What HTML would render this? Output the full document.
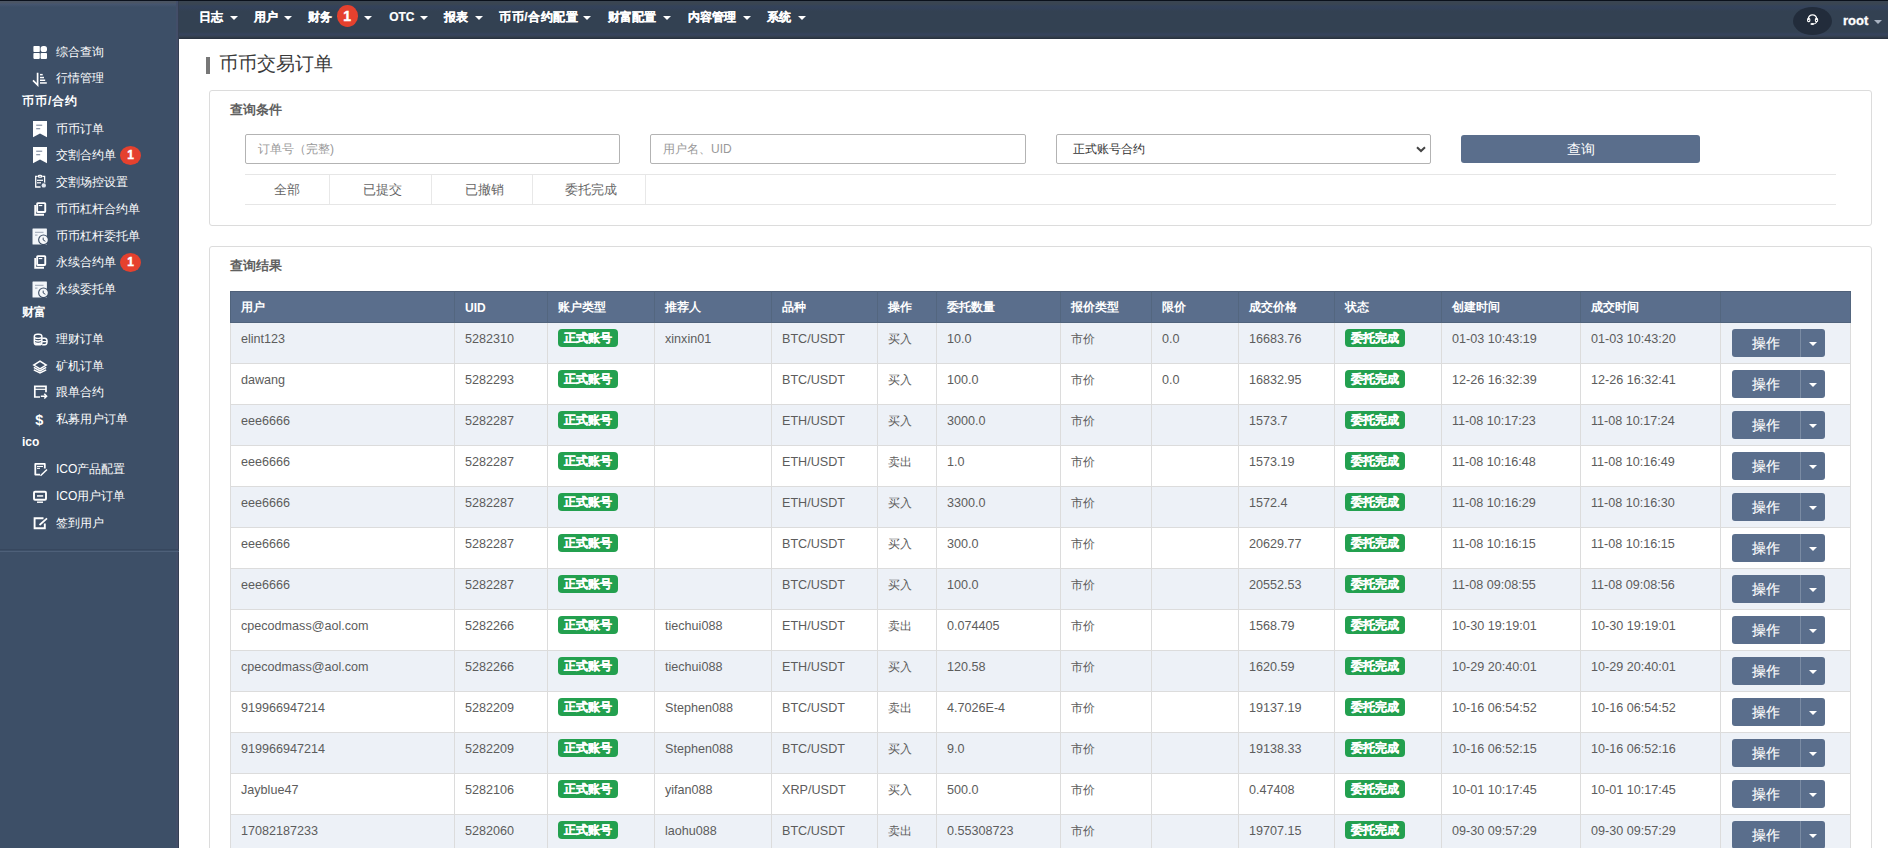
<!DOCTYPE html><html><head><meta charset="utf-8"><style>
*{box-sizing:border-box;margin:0;padding:0}
html,body{width:1888px;height:848px;overflow:hidden;background:#fff;font-family:"Liberation Sans",sans-serif;}
.a{position:absolute;white-space:nowrap}
#sb{position:absolute;left:0;top:0;width:179px;height:848px;background:#3d4f67}
#nav{position:absolute;left:179px;top:0;width:1709px;height:39px;background:linear-gradient(#3a4552 0px,#3a4552 4px,#34435a 6px,#34425a 8px,#334152 11px,#334152 32px,#36435c 34px,#36435c 35px,#343f4d 37px,#2a3341 38px,#2a3341 39px)}
#topline{position:absolute;left:0;top:0;width:1888px;height:1px;background:#0b111c}
.ni{position:absolute;top:10px;height:14px;line-height:14px;font-size:12px;font-weight:bold;-webkit-text-stroke:0.2px #fff;color:#fff}
.caret{position:absolute;width:0;height:0;border-left:4px solid transparent;border-right:4px solid transparent;border-top:4px solid #fff}
.nbadge{position:absolute;background:#e5412e;color:#fff;font-weight:bold;-webkit-text-stroke:0.4px #fff;border-radius:50%;text-align:center}
.si{position:absolute;left:56px;height:16px;line-height:16px;font-size:12px;color:#fff}
.sh{position:absolute;left:22px;height:16px;line-height:16px;font-size:12px;font-weight:bold;color:#fff}
.ic{position:absolute;left:32px}
.panel{position:absolute;left:209px;width:1663px;border:1px solid #dcdcdc;border-radius:3px;background:#fff}
.ph{position:absolute;left:230px;font-size:13px;font-weight:bold;color:#606060;line-height:14px}
.inp{position:absolute;top:134px;height:30px;border:1px solid #b3b3b3;border-radius:2px;background:#fff;font-size:12px;color:#999;line-height:28px;padding-left:12px}
.tab{position:absolute;top:175px;height:29px;line-height:29px;font-size:13px;color:#666;text-align:center}
.vl{position:absolute;width:1px;background:#e8e8e8}
.hl{position:absolute;height:1px;background:#e6e6e6}
table{position:absolute;left:230px;top:291px;border-collapse:separate;border-spacing:0;table-layout:fixed;font-size:12.6px;color:#5c5c5c}
th{background:#5a6e8c;color:#fff;font-weight:bold;text-align:left;height:32px;padding:1px 0 0 10px;border-right:1px solid #53667f;border-top:1px solid #4f6079;border-bottom:1px solid #50637c;font-size:12px;vertical-align:middle}
th:first-child{border-left:1px solid #50637c}
td{height:41px;border-right:1px solid #dcdcdc;border-bottom:1px solid #dcdcdc;padding:0 0 0 10px;vertical-align:top;padding-top:9px;line-height:15px}
td:first-child{border-left:1px solid #dcdcdc}
tr.s td{background:#edf1f7}
.cj{font-size:12px}
.bd{display:inline-block;background:#23a04f;color:#fff;font-weight:bold;-webkit-text-stroke:0.25px #fff;font-size:12px;height:18px;line-height:18px;border-radius:4px;padding:0 6px;margin-top:-3px;vertical-align:top}
.op{position:relative;display:inline-block;width:93px;height:28px;background:#5a6e8c;border-radius:3px;margin-left:1px;margin-top:-3px;vertical-align:top}
.op span{position:absolute;left:0;top:0;width:68px;height:28px;line-height:28px;text-align:center;color:#fff;font-size:14px;-webkit-text-stroke:0.15px #fff}
.op i{position:absolute;left:68px;top:0;width:1px;height:28px;background:#7a8ba3}
.op b{position:absolute;left:77px;top:13px;width:0;height:0;border-left:4px solid transparent;border-right:4px solid transparent;border-top:4px solid #fff}
</style></head><body>
<div id="sb"></div>
<div class="a" style="left:0;top:0;width:179px;height:7px;background:linear-gradient(#4b5564 1px,#4b5564 3px,#465670 4px,#3d4f67 7px)"></div>
<div class="a" style="left:176px;top:0;width:2px;height:848px;background:#434e69"></div>
<div class="a" style="left:178px;top:0;width:1px;height:848px;background:#353f52"></div>
<div class="a" style="left:0;top:549px;width:179px;height:1px;background:#37475e"></div>
<div class="a" style="left:0;top:551px;width:179px;height:1px;background:#4e6079"></div>
<div class="si" style="top:43.5px">综合查询</div>
<div class="ic" style="top:43.5px"><svg width="18" height="18" viewBox="0 0 18 18"><rect x="1.4" y="1.9" width="6.4" height="6.2" rx="0.8" fill="#fff"/><rect x="8.6" y="1.9" width="6.4" height="6.2" rx="2.6" fill="#fff"/><rect x="1.4" y="8.9" width="6.4" height="6" rx="0.8" fill="#fff"/><rect x="8.6" y="8.9" width="6.4" height="6" rx="0.8" fill="#fff"/></svg></div>
<div class="si" style="top:70.3px">行情管理</div>
<div class="ic" style="top:70.3px"><svg width="18" height="18" viewBox="0 0 18 18"><path d="M1 10.3L5.6 15V2.7" stroke="#fff" stroke-width="1.7" fill="none"/><rect x="8" y="3.9" width="2.7" height="1.5" fill="#fff"/><rect x="8" y="6.8" width="4" height="1.5" fill="#fff"/><rect x="8" y="9.5" width="5.2" height="1.5" fill="#fff"/><rect x="8" y="12.2" width="6.8" height="1.5" fill="#fff"/></svg></div>
<div class="sh" style="top:92.8px;letter-spacing:1px">币币/合约</div>
<div class="si" style="top:120.5px">币币订单</div>
<div class="ic" style="top:120.5px"><svg width="18" height="18" viewBox="0 0 18 18"><path d="M1 0h14v16.2l-7-3.6-7 3.6z" fill="#fff"/><rect x="4.2" y="3.6" width="6" height="1.3" fill="#8f9aab"/><rect x="4.2" y="7" width="4" height="1.3" fill="#8f9aab"/></svg></div>
<div class="si" style="top:147.3px">交割合约单</div>
<div class="ic" style="top:147.3px"><svg width="18" height="18" viewBox="0 0 18 18"><path d="M1 0h14v16.2l-7-3.6-7 3.6z" fill="#fff"/><rect x="4.2" y="3.6" width="6" height="1.3" fill="#8f9aab"/><rect x="4.2" y="7" width="4" height="1.3" fill="#8f9aab"/></svg></div>
<div class="nbadge" style="left:120px;top:145.8px;width:21px;height:19px;line-height:19px;font-size:12px">1</div>
<div class="si" style="top:174.3px">交割场控设置</div>
<div class="ic" style="top:174.3px"><svg width="18" height="18" viewBox="0 0 18 18"><path d="M5.6 2.3H3.7V13H8.6" stroke="#fff" stroke-width="1.3" fill="none"/><path d="M10.4 2.3h2.2v7" stroke="#fff" stroke-width="1.3" fill="none"/><rect x="6.4" y="1.3" width="3.4" height="1.8" rx="0.9" stroke="#fff" stroke-width="1.3" fill="none"/><rect x="5" y="5.7" width="6" height="1.2" fill="#fff"/><rect x="5" y="8.2" width="4" height="1.2" fill="#fff"/><circle cx="11.8" cy="11.4" r="3" fill="#3d4f67"/><circle cx="11.8" cy="11.4" r="2.2" fill="#dfe5ee"/></svg></div>
<div class="si" style="top:201px">币币杠杆合约单</div>
<div class="ic" style="top:201px"><svg width="18" height="18" viewBox="0 0 18 18"><rect x="5.15" y="2.15" width="8.1" height="8.8" rx="0.6" stroke="#fff" stroke-width="1.9" fill="none"/><path d="M3.2 4v9.75H12" stroke="#fff" stroke-width="1.8" fill="none"/><rect x="6.8" y="4" width="3.5" height="1.1" fill="#fff"/></svg></div>
<div class="si" style="top:227.5px">币币杠杆委托单</div>
<div class="ic" style="top:227.5px"><svg width="18" height="18" viewBox="0 0 18 18"><rect x="0.5" y="0.4" width="14.4" height="16.1" rx="0.5" fill="#f2f6fa"/><rect x="3" y="3.8" width="8.5" height="1" fill="#9aa4b4"/><rect x="3" y="6.6" width="2.5" height="1" fill="#9aa4b4"/><circle cx="11.5" cy="11.8" r="5.4" fill="#3d4f67"/><circle cx="11.5" cy="11.8" r="4.3" fill="#f4f6f9"/><path d="M11.2 9.6V12l2.2 1.3" stroke="#3d4f67" stroke-width="1" fill="none"/></svg></div>
<div class="si" style="top:254.3px">永续合约单</div>
<div class="ic" style="top:254.3px"><svg width="18" height="18" viewBox="0 0 18 18"><rect x="5.15" y="2.15" width="8.1" height="8.8" rx="0.6" stroke="#fff" stroke-width="1.9" fill="none"/><path d="M3.2 4v9.75H12" stroke="#fff" stroke-width="1.8" fill="none"/><rect x="6.8" y="4" width="3.5" height="1.1" fill="#fff"/></svg></div>
<div class="nbadge" style="left:120px;top:252.8px;width:21px;height:19px;line-height:19px;font-size:12px">1</div>
<div class="si" style="top:280.7px">永续委托单</div>
<div class="ic" style="top:280.7px"><svg width="18" height="18" viewBox="0 0 18 18"><rect x="0.5" y="0.4" width="14.4" height="16.1" rx="0.5" fill="#f2f6fa"/><rect x="3" y="3.8" width="8.5" height="1" fill="#9aa4b4"/><rect x="3" y="6.6" width="2.5" height="1" fill="#9aa4b4"/><circle cx="11.5" cy="11.8" r="5.4" fill="#3d4f67"/><circle cx="11.5" cy="11.8" r="4.3" fill="#f4f6f9"/><path d="M11.2 9.6V12l2.2 1.3" stroke="#3d4f67" stroke-width="1" fill="none"/></svg></div>
<div class="sh" style="top:303.5px">财富</div>
<div class="si" style="top:331.3px">理财订单</div>
<div class="ic" style="top:331.3px"><svg width="18" height="18" viewBox="0 0 18 18"><rect x="2.35" y="3.15" width="7.5" height="10.7" rx="3" ry="2.2" stroke="#fff" stroke-width="1.5" fill="none"/><path d="M2.6 6.6q3.5 1.6 7 0M2.6 9.2q3.5 1.6 7 0M2.6 11.6q3.5 1.6 7 0" stroke="#fff" stroke-width="1.3" fill="none"/><path d="M10.2 7.3h2.5c1.5 0 2.4 1.2 2.4 3.2s-.9 3.3-2.4 3.3h-2.5M10.2 10.6h4.5" stroke="#fff" stroke-width="1.4" fill="none"/></svg></div>
<div class="si" style="top:357.5px">矿机订单</div>
<div class="ic" style="top:357.5px"><svg width="18" height="18" viewBox="0 0 18 18"><path d="M8 3.1l6.2 4-6.2 3.8-6.2-3.8z" stroke="#fff" stroke-width="1.5" fill="none"/><path d="M1.8 9.4l6.2 3.6 6.2-3.6M1.8 11.8l6.2 3.2 6.2-3.2" stroke="#fff" stroke-width="1.5" fill="none"/></svg></div>
<div class="si" style="top:384.3px">跟单合约</div>
<div class="ic" style="top:384.3px"><svg width="18" height="18" viewBox="0 0 18 18"><path d="M8 13H2.8V2.3h11.2v6" stroke="#fff" stroke-width="1.7" fill="none"/><rect x="2.5" y="4.7" width="11.5" height="1.2" fill="#fff"/><path d="M8.8 12.2h5.5M12.3 9.8l2.3 2.4-2.3 2.4" stroke="#fff" stroke-width="1.5" fill="none"/></svg></div>
<div class="si" style="top:411px">私募用户订单</div>
<div class="ic" style="top:411px"><svg width="18" height="18" viewBox="0 0 18 18"><text x="3.3" y="14" font-family="Liberation Sans" font-weight="bold" font-size="14.5" fill="#fff">$</text></svg></div>
<div class="sh" style="top:433.5px">ico</div>
<div class="si" style="top:461.3px">ICO产品配置</div>
<div class="ic" style="top:461.3px"><svg width="18" height="18" viewBox="0 0 18 18"><path d="M8 13.6H3.3V2.9h9.5v4.6" stroke="#fff" stroke-width="1.8" fill="none" stroke-linejoin="round"/><rect x="5" y="4.9" width="6" height="1.1" fill="#fff"/><rect x="5" y="6.8" width="3" height="1.1" fill="#fff"/><path d="M8.5 14.8L15 8.5" stroke="#fff" stroke-width="1.5" fill="none"/></svg></div>
<div class="si" style="top:488px">ICO用户订单</div>
<div class="ic" style="top:488px"><svg width="18" height="18" viewBox="0 0 18 18"><rect x="2" y="3.7" width="12" height="8.1" rx="1" stroke="#fff" stroke-width="1.9" fill="none"/><rect x="5" y="7.2" width="6.2" height="1.5" fill="#fff"/><rect x="5" y="13.5" width="6" height="1.4" fill="#fff"/></svg></div>
<div class="si" style="top:514.5px">签到用户</div>
<div class="ic" style="top:514.5px"><svg width="18" height="18" viewBox="0 0 18 18"><path d="M11.5 3.3H2.6v9.9h10.2V8.5" stroke="#fff" stroke-width="1.9" fill="none"/><path d="M7.5 10L15 3.3" stroke="#fff" stroke-width="1.7" fill="none"/></svg></div>
<div id="nav"></div>
<div id="topline"></div>
<div class="ni" style="left:198.5px">日志</div>
<div class="caret" style="left:229.7px;top:16px"></div>
<div class="ni" style="left:253.5px">用户</div>
<div class="caret" style="left:284px;top:16px"></div>
<div class="ni" style="left:308.2px">财务</div>
<div class="caret" style="left:364px;top:16px"></div>
<div class="ni" style="left:389.2px">OTC</div>
<div class="caret" style="left:419.7px;top:16px"></div>
<div class="ni" style="left:444px">报表</div>
<div class="caret" style="left:475px;top:16px"></div>
<div class="ni" style="left:499.3px;letter-spacing:.5px">币币/合约配置</div>
<div class="caret" style="left:583px;top:16px"></div>
<div class="ni" style="left:607.8px">财富配置</div>
<div class="caret" style="left:663px;top:16px"></div>
<div class="ni" style="left:687.5px">内容管理</div>
<div class="caret" style="left:743px;top:16px"></div>
<div class="ni" style="left:767px">系统</div>
<div class="caret" style="left:798px;top:16px"></div>
<div class="nbadge" style="left:336.5px;top:5px;width:21.5px;height:22px;line-height:22px;font-size:14px">1</div>
<div class="a" style="left:1793px;top:7px;width:39px;height:28px;border-radius:50%;background:#222c3b"></div>
<svg class="a" style="left:1806px;top:13px" width="13" height="13" viewBox="0 0 13 13"><path d="M2.3 7V6a4.2 4.2 0 0 1 8.4 0V7" stroke="#fff" stroke-width="1.2" fill="none"/><rect x="1.6" y="5.6" width="2.2" height="3" rx="0.8" stroke="#fff" stroke-width="1.1" fill="none"/><rect x="9.4" y="5.6" width="2.2" height="3" rx="0.8" stroke="#fff" stroke-width="1.1" fill="none"/><path d="M10.5 9c-.3 1.3-1.8 2-3.8 2" stroke="#fff" stroke-width="1.1" fill="none"/><ellipse cx="6.2" cy="11" rx="1.8" ry="1" fill="#fff"/></svg>
<div class="a" style="left:1843px;top:13.5px;font-size:13px;font-weight:bold;-webkit-text-stroke:0.3px #fff;color:#fff;line-height:14px">root</div>
<div class="caret" style="left:1874px;top:20px;border-top-color:#a9b3c2"></div>
<div class="a" style="left:206px;top:57px;width:4px;height:17px;background:#777"></div>
<div class="a" style="left:219px;top:52px;font-size:19px;color:#3a3a3a;line-height:24px">币币交易订单</div>
<div class="panel" style="top:90px;height:136px"></div>
<div class="ph" style="top:103px">查询条件</div>
<div class="inp" style="left:245px;width:375px">订单号（完整)</div>
<div class="inp" style="left:650px;width:376px">用户名、UID</div>
<div class="inp" style="left:1056px;width:375px;color:#333;padding-left:16px">正式账号合约</div>
<svg class="a" style="left:1416px;top:145px" width="10" height="8" viewBox="0 0 10 8"><path d="M1 2.2l4 3.8 4-3.8" stroke="#444" stroke-width="2" fill="none"/></svg>
<div class="a" style="left:1461px;top:135px;width:239px;height:28px;background:#5a6e8c;border-radius:3px;color:#fff;font-size:14px;text-align:center;line-height:28px">查询</div>
<div class="hl" style="left:245px;top:174px;width:1591px"></div>
<div class="hl" style="left:245px;top:204px;width:1591px"></div>
<div class="vl" style="left:329px;top:175px;height:29px"></div>
<div class="vl" style="left:431px;top:175px;height:29px"></div>
<div class="vl" style="left:532px;top:175px;height:29px"></div>
<div class="vl" style="left:645px;top:175px;height:29px"></div>
<div class="tab" style="left:274px">全部</div>
<div class="tab" style="left:363px">已提交</div>
<div class="tab" style="left:465px">已撤销</div>
<div class="tab" style="left:565px">委托完成</div>
<div class="panel" style="top:246px;height:700px"></div>
<div class="ph" style="top:259px">查询结果</div>
<table style="width:1621px"><colgroup><col style="width:225px"><col style="width:93px"><col style="width:107px"><col style="width:117px"><col style="width:106px"><col style="width:59px"><col style="width:124px"><col style="width:91px"><col style="width:87px"><col style="width:96px"><col style="width:107px"><col style="width:139px"><col style="width:140px"><col style="width:130px"></colgroup><tr><th>用户</th><th>UID</th><th>账户类型</th><th>推荐人</th><th>品种</th><th>操作</th><th>委托数量</th><th>报价类型</th><th>限价</th><th>成交价格</th><th>状态</th><th>创建时间</th><th>成交时间</th><th></th></tr><tr class="s"><td>elint123</td><td>5282310</td><td><span class="bd">正式账号</span></td><td>xinxin01</td><td>BTC/USDT</td><td><span class="cj">买入</span></td><td>10.0</td><td><span class="cj">市价</span></td><td>0.0</td><td>16683.76</td><td><span class="bd">委托完成</span></td><td>01-03 10:43:19</td><td>01-03 10:43:20</td><td><span class="op"><span>操作</span><i></i><b></b></span></td></tr><tr><td>dawang</td><td>5282293</td><td><span class="bd">正式账号</span></td><td></td><td>BTC/USDT</td><td><span class="cj">买入</span></td><td>100.0</td><td><span class="cj">市价</span></td><td>0.0</td><td>16832.95</td><td><span class="bd">委托完成</span></td><td>12-26 16:32:39</td><td>12-26 16:32:41</td><td><span class="op"><span>操作</span><i></i><b></b></span></td></tr><tr class="s"><td>eee6666</td><td>5282287</td><td><span class="bd">正式账号</span></td><td></td><td>ETH/USDT</td><td><span class="cj">买入</span></td><td>3000.0</td><td><span class="cj">市价</span></td><td></td><td>1573.7</td><td><span class="bd">委托完成</span></td><td>11-08 10:17:23</td><td>11-08 10:17:24</td><td><span class="op"><span>操作</span><i></i><b></b></span></td></tr><tr><td>eee6666</td><td>5282287</td><td><span class="bd">正式账号</span></td><td></td><td>ETH/USDT</td><td><span class="cj">卖出</span></td><td>1.0</td><td><span class="cj">市价</span></td><td></td><td>1573.19</td><td><span class="bd">委托完成</span></td><td>11-08 10:16:48</td><td>11-08 10:16:49</td><td><span class="op"><span>操作</span><i></i><b></b></span></td></tr><tr class="s"><td>eee6666</td><td>5282287</td><td><span class="bd">正式账号</span></td><td></td><td>ETH/USDT</td><td><span class="cj">买入</span></td><td>3300.0</td><td><span class="cj">市价</span></td><td></td><td>1572.4</td><td><span class="bd">委托完成</span></td><td>11-08 10:16:29</td><td>11-08 10:16:30</td><td><span class="op"><span>操作</span><i></i><b></b></span></td></tr><tr><td>eee6666</td><td>5282287</td><td><span class="bd">正式账号</span></td><td></td><td>BTC/USDT</td><td><span class="cj">买入</span></td><td>300.0</td><td><span class="cj">市价</span></td><td></td><td>20629.77</td><td><span class="bd">委托完成</span></td><td>11-08 10:16:15</td><td>11-08 10:16:15</td><td><span class="op"><span>操作</span><i></i><b></b></span></td></tr><tr class="s"><td>eee6666</td><td>5282287</td><td><span class="bd">正式账号</span></td><td></td><td>BTC/USDT</td><td><span class="cj">买入</span></td><td>100.0</td><td><span class="cj">市价</span></td><td></td><td>20552.53</td><td><span class="bd">委托完成</span></td><td>11-08 09:08:55</td><td>11-08 09:08:56</td><td><span class="op"><span>操作</span><i></i><b></b></span></td></tr><tr><td>cpecodmass@aol.com</td><td>5282266</td><td><span class="bd">正式账号</span></td><td>tiechui088</td><td>ETH/USDT</td><td><span class="cj">卖出</span></td><td>0.074405</td><td><span class="cj">市价</span></td><td></td><td>1568.79</td><td><span class="bd">委托完成</span></td><td>10-30 19:19:01</td><td>10-30 19:19:01</td><td><span class="op"><span>操作</span><i></i><b></b></span></td></tr><tr class="s"><td>cpecodmass@aol.com</td><td>5282266</td><td><span class="bd">正式账号</span></td><td>tiechui088</td><td>ETH/USDT</td><td><span class="cj">买入</span></td><td>120.58</td><td><span class="cj">市价</span></td><td></td><td>1620.59</td><td><span class="bd">委托完成</span></td><td>10-29 20:40:01</td><td>10-29 20:40:01</td><td><span class="op"><span>操作</span><i></i><b></b></span></td></tr><tr><td>919966947214</td><td>5282209</td><td><span class="bd">正式账号</span></td><td>Stephen088</td><td>BTC/USDT</td><td><span class="cj">卖出</span></td><td>4.7026E-4</td><td><span class="cj">市价</span></td><td></td><td>19137.19</td><td><span class="bd">委托完成</span></td><td>10-16 06:54:52</td><td>10-16 06:54:52</td><td><span class="op"><span>操作</span><i></i><b></b></span></td></tr><tr class="s"><td>919966947214</td><td>5282209</td><td><span class="bd">正式账号</span></td><td>Stephen088</td><td>BTC/USDT</td><td><span class="cj">买入</span></td><td>9.0</td><td><span class="cj">市价</span></td><td></td><td>19138.33</td><td><span class="bd">委托完成</span></td><td>10-16 06:52:15</td><td>10-16 06:52:16</td><td><span class="op"><span>操作</span><i></i><b></b></span></td></tr><tr><td>Jayblue47</td><td>5282106</td><td><span class="bd">正式账号</span></td><td>yifan088</td><td>XRP/USDT</td><td><span class="cj">买入</span></td><td>500.0</td><td><span class="cj">市价</span></td><td></td><td>0.47408</td><td><span class="bd">委托完成</span></td><td>10-01 10:17:45</td><td>10-01 10:17:45</td><td><span class="op"><span>操作</span><i></i><b></b></span></td></tr><tr class="s"><td>17082187233</td><td>5282060</td><td><span class="bd">正式账号</span></td><td>laohu088</td><td>BTC/USDT</td><td><span class="cj">卖出</span></td><td>0.55308723</td><td><span class="cj">市价</span></td><td></td><td>19707.15</td><td><span class="bd">委托完成</span></td><td>09-30 09:57:29</td><td>09-30 09:57:29</td><td><span class="op"><span>操作</span><i></i><b></b></span></td></tr></table>
</body></html>
